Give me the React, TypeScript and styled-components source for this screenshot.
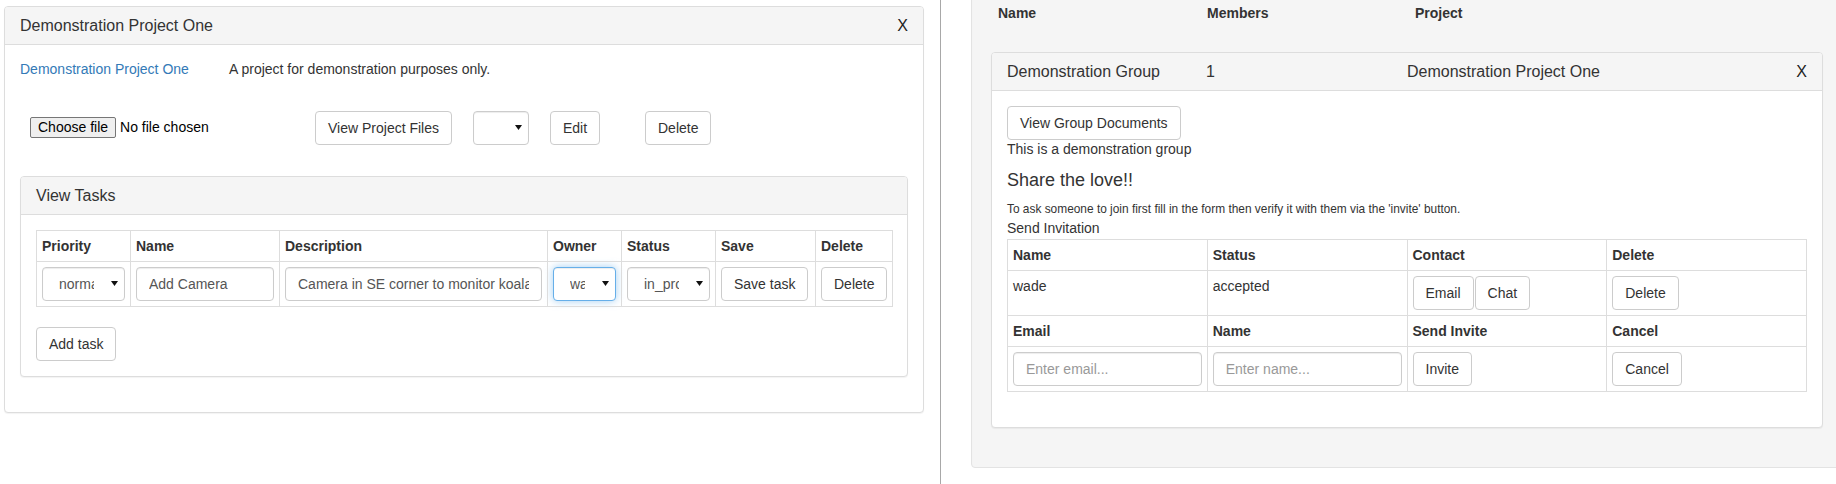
import React from "react"
import styled, { createGlobalStyle, css } from "styled-components"

const GlobalStyle = createGlobalStyle`
    html, body {
        margin: 0;
        padding: 0;
        overflow: hidden;
        background: #fff;
    }

    body {
        font-family: "Liberation Sans", Arial, Helvetica, sans-serif;
        font-size: 14px;
        line-height: 1.42857;
        color: #333;
    }

    * {
        box-sizing: border-box;
    }
`

type Task = {
    priority: string
    name: string
    description: string
    owner: string
    status: string
}

const taskColumns = [
    { title: "Priority", width: 94 },
    { title: "Name", width: 149 },
    { title: "Description", width: 268 },
    { title: "Owner", width: 74 },
    { title: "Status", width: 94 },
    { title: "Save", width: 100 },
    { title: "Delete", width: 77 },
]

const tasks: Task[] = [
    {
        priority: "normal",
        name: "Add Camera",
        description: "Camera in SE corner to monitor koalas",
        owner: "wade",
        status: "in_progress",
    },
]

const Caret = () => (
    <svg width="7" height="5" viewBox="0 0 7 5">
        <polygon points="0,0 7,0 3.5,5" fill="#111" />
    </svg>
)

type SelectProps = {
    value?: string
    width?: number
    focused?: boolean
}

const Select = ({ value = "", width, focused }: SelectProps) => (
    <SelectBox $focused={focused} style={width ? { width } : undefined}>
        <SelectText>{value}</SelectText>
        <Caret />
    </SelectBox>
)

const ProjectPanel = () => (
    <Panel>
        <PanelHeading>
            <PanelTitle>Demonstration Project One</PanelTitle>
            <Close>X</Close>
        </PanelHeading>
        <PanelBody>
            <InfoRow>
                <ProjectLink href="#">Demonstration Project One</ProjectLink>
                <span>A project for demonstration purposes only.</span>
            </InfoRow>
            <ActionRow>
                <FileField>
                    <FileButton type="button">Choose file</FileButton>
                    <FileName>No file chosen</FileName>
                </FileField>
                <Button>View Project Files</Button>
                <Select width={56} />
                <Button>Edit</Button>
                <Button>Delete</Button>
            </ActionRow>
            <SubPanel>
                <PanelHeading>
                    <PanelTitle>View Tasks</PanelTitle>
                </PanelHeading>
                <PanelBody>
                    <TaskTable>
                        <thead>
                            <tr>
                                {taskColumns.map(col => (
                                    <Th key={col.title} style={{ width: col.width }}>{col.title}</Th>
                                ))}
                            </tr>
                        </thead>
                        <tbody>
                            {tasks.map(task => (
                                <tr key={task.name}>
                                    <Td><Select value={task.priority} /></Td>
                                    <Td><TextInput defaultValue={task.name} readOnly /></Td>
                                    <Td><TextInput defaultValue={task.description} readOnly /></Td>
                                    <Td><Select value={task.owner} focused /></Td>
                                    <Td><Select value={task.status} /></Td>
                                    <Td><Button>Save task</Button></Td>
                                    <Td><Button>Delete</Button></Td>
                                </tr>
                            ))}
                        </tbody>
                    </TaskTable>
                    <Button>Add task</Button>
                </PanelBody>
            </SubPanel>
        </PanelBody>
    </Panel>
)

const GroupPanel = () => (
    <GroupCard>
        <PanelHeading>
            <GroupHeading>
                <PanelTitle>Demonstration Group</PanelTitle>
                <PanelTitle>1</PanelTitle>
                <PanelTitle>Demonstration Project One</PanelTitle>
                <Close>X</Close>
            </GroupHeading>
        </PanelHeading>
        <PanelBody>
            <Button>View Group Documents</Button>
            <div>This is a demonstration group</div>
            <ShareTitle>Share the love!!</ShareTitle>
            <Hint>To ask someone to join first fill in the form then verify it with them via the 'invite' button.</Hint>
            <div>Send Invitation</div>
            <GroupTable>
                <tbody>
                    <tr>
                        <Th>Name</Th>
                        <Th>Status</Th>
                        <Th>Contact</Th>
                        <Th>Delete</Th>
                    </tr>
                    <tr>
                        <Td>wade</Td>
                        <Td>accepted</Td>
                        <Td>
                            <ButtonPair>
                                <Button>Email</Button>
                                <Button>Chat</Button>
                            </ButtonPair>
                        </Td>
                        <Td><Button>Delete</Button></Td>
                    </tr>
                    <tr>
                        <Th>Email</Th>
                        <Th>Name</Th>
                        <Th>Send Invite</Th>
                        <Th>Cancel</Th>
                    </tr>
                    <tr>
                        <Td><TextInput placeholder="Enter email..." /></Td>
                        <Td><TextInput placeholder="Enter name..." /></Td>
                        <Td><Button>Invite</Button></Td>
                        <Td><Button>Cancel</Button></Td>
                    </tr>
                </tbody>
            </GroupTable>
        </PanelBody>
    </GroupCard>
)

export default function App() {
    return (
        <>
            <GlobalStyle />
            <Page>
                <LeftColumn>
                    <ProjectPanel />
                </LeftColumn>
                <RightColumn>
                    <Well>
                        <WellHeader>
                            <span>Name</span>
                            <span>Members</span>
                            <span>Project</span>
                        </WellHeader>
                        <GroupPanel />
                    </Well>
                </RightColumn>
            </Page>
        </>
    )
}

const Page = styled.div`
    display: flex;
    width: 1836px;
    height: 484px;
    overflow: hidden;
`

const LeftColumn = styled.div`
    width: 941px;
    flex-shrink: 0;
    padding: 6px 16px 0 4px;
    border-right: 1px solid #a8a8a8;
`

const RightColumn = styled.div`
    flex: 1;
    padding-left: 30px;
    overflow: hidden;
`

const Well = styled.div`
    width: 872px;
    margin-top: -16px;
    padding: 19px;
    background: #f5f5f5;
    border: 1px solid #e3e3e3;
    border-radius: 4px;
    box-shadow: inset 0 1px 1px rgba(0, 0, 0, .05);
`

const WellHeader = styled.div`
    display: grid;
    grid-template-columns: 209px 208px auto;
    padding-left: 7px;
    margin-bottom: 28px;
    font-weight: bold;
`

const Panel = styled.div`
    background: #fff;
    border: 1px solid #ddd;
    border-radius: 4px;
    box-shadow: 0 1px 1px rgba(0, 0, 0, .05);
`

const SubPanel = styled(Panel)`
    margin-top: 31px;
    margin-bottom: 20px;
`

const GroupCard = styled(Panel)`
    margin-bottom: 20px;
`

const PanelHeading = styled.div`
    display: flex;
    align-items: center;
    justify-content: space-between;
    padding: 10px 15px;
    background: #f5f5f5;
    border-bottom: 1px solid #ddd;
    border-radius: 3px 3px 0 0;
    color: #333;
`

const PanelTitle = styled.span`
    font-size: 16px;
    line-height: 17px;
`

const Close = styled.span`
    font-size: 16px;
    line-height: 17px;
    color: #222;
    justify-self: end;
`

const GroupHeading = styled.div`
    display: grid;
    grid-template-columns: 199px 201px 200px 1fr;
    align-items: center;
    width: 100%;
`

const PanelBody = styled.div`
    padding: 15px;
`

const InfoRow = styled.div`
    display: grid;
    grid-template-columns: 209px auto;
`

const ProjectLink = styled.a`
    color: #337ab7;
    text-decoration: none;
`

const ActionRow = styled.div`
    display: grid;
    grid-template-columns: 295px 158px 77px 95px auto;
    align-items: center;
    justify-items: start;
    margin-top: 31px;
`

const FileField = styled.div`
    display: flex;
    align-items: center;
    padding-left: 10px;
    font-size: 14px;
    color: #000;
`

const FileButton = styled.button`
    font-family: "Liberation Sans", Arial, sans-serif;
    font-size: 14px;
    line-height: 17px;
    padding: 1px 7px;
    margin: 0 4px 0 0;
    color: #000;
    background: #efefef;
    border: 1px solid #767676;
    border-radius: 2px;
`

const FileName = styled.span`
    white-space: nowrap;
`

const Button = styled.button`
    display: inline-block;
    vertical-align: middle;
    padding: 6px 12px;
    margin: 0;
    font-family: inherit;
    font-size: 14px;
    line-height: 20px;
    color: #333;
    white-space: nowrap;
    background: #fff;
    border: 1px solid #ccc;
    border-radius: 4px;
    cursor: pointer;
`

const ButtonPair = styled.div`
    display: flex;
    gap: 1px;
`

const controlBase = css`
    height: 34px;
    font-family: inherit;
    font-size: 14px;
    line-height: 20px;
    color: #555;
    background: #fff;
    border: 1px solid #ccc;
    border-radius: 4px;
    box-shadow: inset 0 1px 1px rgba(0, 0, 0, .075);
`

const SelectBox = styled.div<{ $focused?: boolean }>`
    ${controlBase};
    display: flex;
    align-items: center;
    width: 100%;
    padding: 0 6px 0 16px;

    ${({ $focused }) => $focused && css`
        border-color: #66afe9;
        box-shadow: inset 0 1px 1px rgba(0, 0, 0, .075), 0 0 8px rgba(102, 175, 233, .6);
    `}
`

const SelectText = styled.span`
    flex: 1;
    min-width: 0;
    margin-right: 17px;
    overflow: hidden;
    white-space: nowrap;
`

const TextInput = styled.input`
    ${controlBase};
    display: block;
    width: 100%;
    padding: 6px 12px;
    outline: none;

    &::placeholder {
        color: #999;
    }
`

const tableBase = css`
    width: 100%;
    border-collapse: collapse;
    border-spacing: 0;
    table-layout: fixed;
    margin-bottom: 20px;
    border: 1px solid #ddd;
`

const TaskTable = styled.table`
    ${tableBase};
`

const GroupTable = styled.table`
    ${tableBase};
`

const Th = styled.th`
    padding: 5px;
    text-align: left;
    font-weight: bold;
    line-height: 20px;
    vertical-align: bottom;
    border: 1px solid #ddd;
`

const Td = styled.td`
    padding: 5px;
    line-height: 20px;
    vertical-align: top;
    border: 1px solid #ddd;
`

const ShareTitle = styled.h4`
    margin: 10px 0;
    font-size: 18px;
    font-weight: 500;
    line-height: 20px;
`

const Hint = styled.p`
    margin: 0;
    font-size: 11.9px;
    line-height: 19px;
`
